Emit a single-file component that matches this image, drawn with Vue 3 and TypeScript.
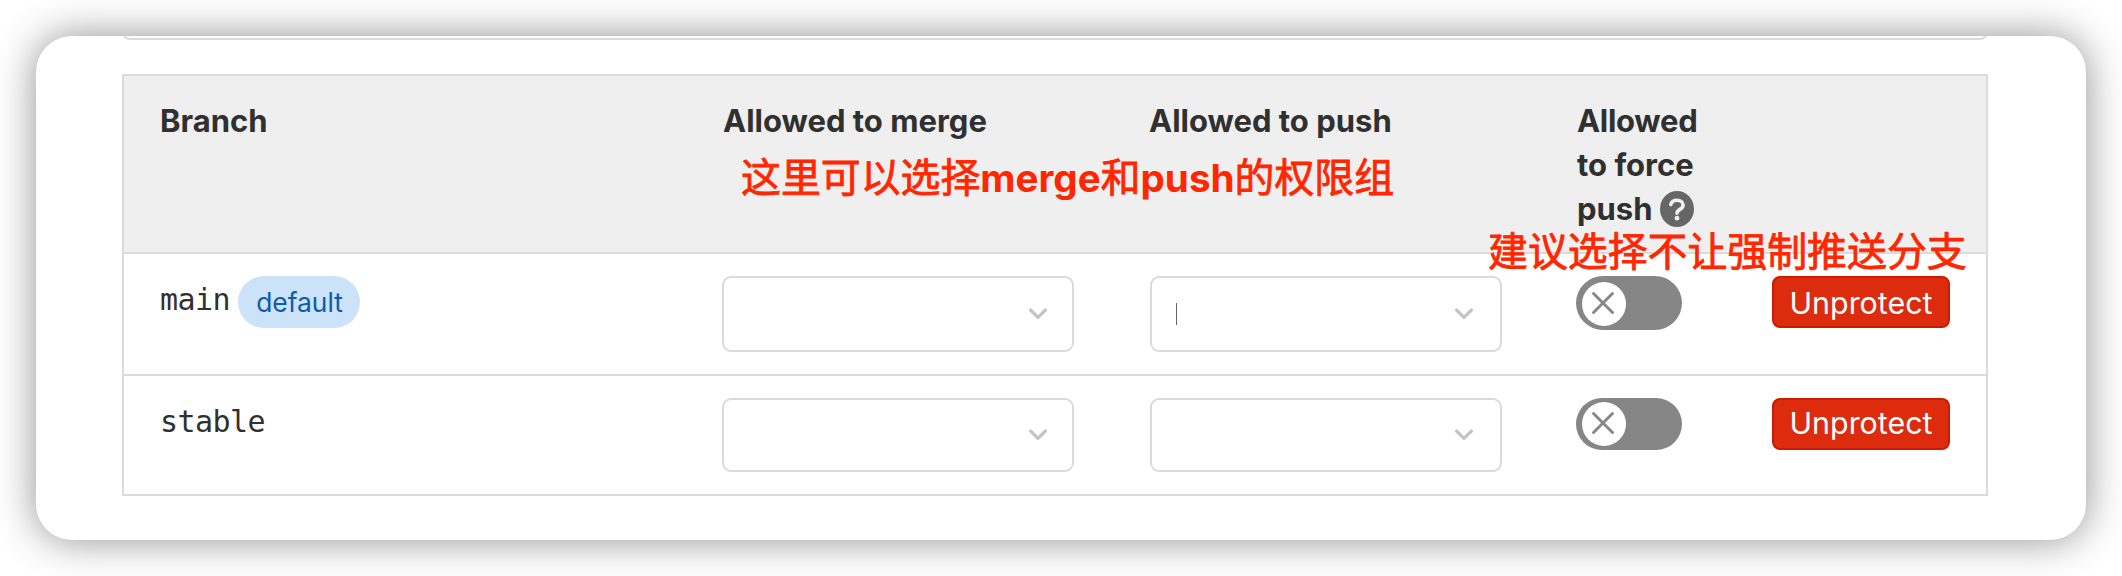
<script setup lang="ts">
interface Branch {
  name: string
  isDefault: boolean
  focused: boolean
}

const branches: Branch[] = [
  { name: 'main', isDefault: true, focused: true },
  { name: 'stable', isDefault: false, focused: false },
]
</script>

<template>
  <div class="stage">
    <main class="window">
      <div class="previous-field"></div>

      <section class="table">
        <header class="row head">
          <div class="cell">Branch</div>
          <div class="cell shifted">Allowed to merge</div>
          <div class="cell">Allowed to push</div>
          <div class="cell force">
            <span class="first-line">Allowed</span>
            <span>to force</span>
            <span class="with-help">
              push
              <svg class="help" viewBox="0 0 34 36" aria-label="Help">
                <ellipse cx="17" cy="18" rx="17" ry="18" fill="#666" />
                <path d="M10.8 13.6C11.4 10.8 13.6 9.2 17 9.2c3.6 0 6.1 1.9 6.1 5 0 4.3-6.1 4-6.1 8" fill="none" stroke="#f0f0f0" stroke-width="3.6" stroke-linecap="round" />
                <circle cx="17" cy="27.2" r="2.4" fill="#f0f0f0" />
              </svg>
            </span>
          </div>
          <div class="cell"></div>
        </header>

        <div v-for="b in branches" :key="b.name" class="row body" :class="{ last: !b.isDefault }">
          <div class="cell name">
            <span class="ref">{{ b.name }}</span>
            <span v-if="b.isDefault" class="badge">default</span>
          </div>
          <div v-for="level in ['merge', 'push']" :key="level" class="cell">
            <div class="select" :class="level">
              <i v-if="b.focused && level === 'push'" class="caret"></i>
              <svg class="chevron" viewBox="0 0 18 12">
                <path d="M1.6 2 9 9.3 16.4 2" fill="none" stroke="#c4c4c4" stroke-width="3.2" stroke-linecap="round" stroke-linejoin="round" />
              </svg>
            </div>
          </div>
          <div class="cell">
            <button class="toggle" type="button" aria-label="Allowed to force push">
              <span class="knob">
                <svg viewBox="0 0 44 44">
                  <path d="M11.5 11.5 30.5 30.5M30.5 11.5 11.5 30.5" fill="none" stroke="#868686" stroke-width="2.9" stroke-linecap="round" />
                </svg>
              </span>
            </button>
          </div>
          <div class="cell">
            <button class="unprotect" type="button">Unprotect</button>
          </div>
        </div>
      </section>
    </main>

    <p class="note note-groups">这里可以选择<b>merge</b>和<b>push</b>的权限组</p>
    <p class="note note-force">建议选择不让强制推送分支</p>
  </div>
</template>

<style>
body {
  margin: 0;
  background: #fff;
}
</style>

<style scoped>
.stage {
  position: relative;
  box-sizing: border-box;
  width: 2122px;
  height: 576px;
  padding: 36px;
  overflow: hidden;
  font-family: Inter, "Noto Sans CJK SC", sans-serif;
  color: #303030;
}
.window {
  box-sizing: border-box;
  width: 2050px;
  height: 504px;
  padding: 0 98px 0 86px;
  overflow: hidden;
  border-radius: 36px;
  background: #fff;
  box-shadow: 0 0 40px rgba(0, 0, 0, 0.44);
}
.previous-field {
  box-sizing: border-box;
  height: 20px;
  margin-top: -16px;
  border: 2px solid #dbdbdb;
  border-radius: 8px;
}
.table {
  box-sizing: border-box;
  height: 422px;
  margin-top: 34px;
  border: 2px solid #dbdbdb;
}
.row {
  display: grid;
  box-sizing: border-box;
  grid-template-columns: 562px 427px 427px 195px 1fr;
  padding-left: 36px;
}
.head {
  height: 178px;
  padding-top: 23px;
  border-bottom: 2px solid #dbdbdb;
  background: #efefef;
  font-size: 31px;
  font-weight: 700;
  line-height: 44px;
}
.shifted {
  padding-left: 1px;
}
.force {
  display: flex;
  flex-direction: column;
  padding-left: 1px;
}
.first-line {
  letter-spacing: -0.3px;
}
.with-help {
  display: flex;
  align-items: center;
}
.help {
  width: 34px;
  height: 36px;
  margin-left: 7px;
}
.body {
  height: 122px;
  padding-top: 22px;
  border-bottom: 2px solid #dbdbdb;
}
.body.last {
  height: 118px;
  border-bottom: 0;
}
.name {
  display: flex;
  align-items: flex-start;
}
.ref {
  font: 30px/48px "DejaVu Sans Mono", monospace;
  letter-spacing: -0.56px;
}
.badge {
  box-sizing: border-box;
  width: 122px;
  height: 52px;
  margin-left: 8px;
  padding-left: 1px;
  border-radius: 26px;
  background: #cbe2f9;
  color: #0b5cad;
  font-size: 26.4px;
  line-height: 52px;
  text-align: center;
}
.select {
  display: flex;
  box-sizing: border-box;
  align-items: center;
  width: 352px;
  height: 76px;
  padding: 0 25px;
  border: 2px solid #dbdbdb;
  border-radius: 9px;
}
.select.push {
  margin-left: 1px;
  padding: 0 27px 0 24px;
}
.last .select {
  height: 74px;
}
.caret {
  width: 1px;
  height: 22px;
  background: #666;
}
.chevron {
  width: 18px;
  height: 12px;
  margin-left: auto;
}
.toggle {
  display: block;
  box-sizing: border-box;
  width: 106px;
  height: 54px;
  padding: 6px;
  border: 0;
  border-radius: 27px;
  background: #868686;
}
.last .toggle {
  height: 52px;
  padding-top: 4px;
}
.knob {
  display: block;
  width: 44px;
  height: 44px;
  border-radius: 50%;
  background: #fff;
}
.knob svg {
  display: block;
}
.unprotect {
  box-sizing: border-box;
  width: 178px;
  height: 52px;
  margin-left: 1px;
  padding: 2px 0 0;
  border: 2px solid #c91c00;
  border-radius: 8px;
  background: #dd2b0e;
  color: #fff;
  font: 400 30.4px/46px Inter, sans-serif;
}
.last .unprotect {
  padding: 0 0 2px;
}
.note {
  position: absolute;
  margin: 0;
  color: #ff2600;
  font-size: 39.9px;
  line-height: 48px;
  white-space: nowrap;
  -webkit-text-stroke: 0.8px #ff2600;
}
.note b {
  font-size: 38.6px;
  font-weight: 700;
  -webkit-text-stroke: 0;
}
.note-groups {
  top: 154px;
  left: 741px;
}
.note-force {
  top: 228px;
  left: 1488px;
}
</style>
